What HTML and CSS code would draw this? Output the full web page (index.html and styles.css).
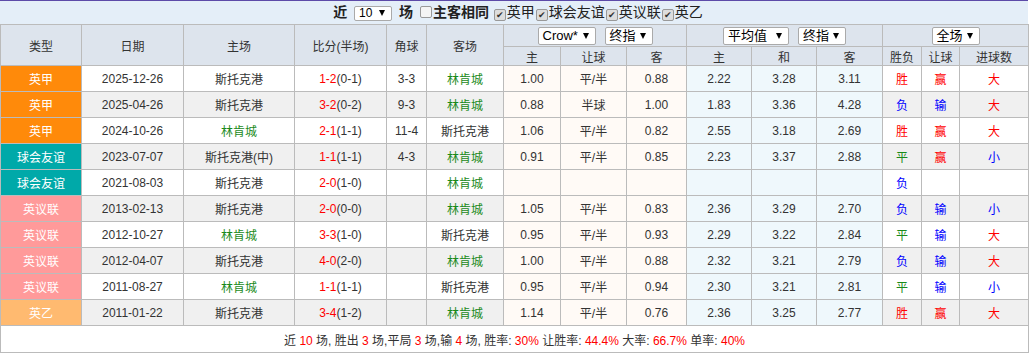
FILE: index.html
```html
<!DOCTYPE html>
<html lang="zh-CN">

<head>
    <meta charset="UTF-8">
    <title>对赛往绩</title>
    <link rel="stylesheet" href="styles.css">
</head>

<body>
    <div class="box">
        <div class="filter">
            <b>近</b>
            <span class="sel num">10</span>
            <b>场</b>
            <span class="chk"></span><b>主客相同</b>
            <span class="chk on">✔</span>英甲<span class="chk on">✔</span>球会友谊<span class="chk on">✔</span>英议联<span class="chk on">✔</span>英乙
        </div>
        <table class="data">
            <colgroup>
                <col style="width:81px">
                <col style="width:102px">
                <col style="width:111px">
                <col style="width:92px">
                <col style="width:40px">
                <col style="width:77px">
                <col style="width:57px">
                <col style="width:66px">
                <col style="width:60px">
                <col style="width:65px">
                <col style="width:65px">
                <col style="width:66px">
                <col style="width:39px">
                <col style="width:38px">
                <col style="width:69px">
            </colgroup>
            <thead>
                <tr class="h1">
                    <th rowspan="2">类型</th>
                    <th rowspan="2">日期</th>
                    <th rowspan="2">主场</th>
                    <th rowspan="2">比分(半场)</th>
                    <th rowspan="2">角球</th>
                    <th rowspan="2">客场</th>
                    <th colspan="3"><span class="sel w58">Crow*</span><span class="sel w48">终指</span></th>
                    <th colspan="3"><span class="sel w66">平均值</span><span class="sel w48">终指</span></th>
                    <th colspan="3"><span class="sel w48">全场</span></th>
                </tr>
                <tr class="h2">
                    <th>主</th><th>让球</th><th>客</th>
                    <th>主</th><th>和</th><th>客</th>
                    <th>胜负</th><th>让球</th><th>进球数</th>
                </tr>
            </thead>
            <tbody>
                <tr>
                    <td class="lg yj">英甲</td><td>2025-12-26</td><td>斯托克港</td>
                    <td><span class="r">1-2</span>(0-1)</td><td>3-3</td><td class="g">林肯城</td>
                    <td class="o1">1.00</td><td class="o1">平/半</td><td class="o1">0.88</td>
                    <td class="o2">2.22</td><td class="o2">3.28</td><td class="o2">3.11</td>
                    <td class="r">胜</td><td class="r">赢</td><td class="r">大</td>
                </tr>
                <tr class="alt">
                    <td class="lg yj">英甲</td><td>2025-04-26</td><td>斯托克港</td>
                    <td><span class="r">3-2</span>(0-2)</td><td>9-3</td><td class="g">林肯城</td>
                    <td class="o1">0.88</td><td class="o1">半球</td><td class="o1">1.00</td>
                    <td class="o2">1.83</td><td class="o2">3.36</td><td class="o2">4.28</td>
                    <td class="b">负</td><td class="b">输</td><td class="r">大</td>
                </tr>
                <tr>
                    <td class="lg yj">英甲</td><td>2024-10-26</td><td class="g">林肯城</td>
                    <td><span class="r">2-1</span>(1-1)</td><td>11-4</td><td>斯托克港</td>
                    <td class="o1">1.06</td><td class="o1">平/半</td><td class="o1">0.82</td>
                    <td class="o2">2.55</td><td class="o2">3.18</td><td class="o2">2.69</td>
                    <td class="r">胜</td><td class="r">赢</td><td class="r">大</td>
                </tr>
                <tr class="alt">
                    <td class="lg yy">球会友谊</td><td>2023-07-07</td><td>斯托克港(中)</td>
                    <td><span class="r">1-1</span>(1-1)</td><td>4-3</td><td class="g">林肯城</td>
                    <td class="o1">0.91</td><td class="o1">平/半</td><td class="o1">0.85</td>
                    <td class="o2">2.23</td><td class="o2">3.37</td><td class="o2">2.88</td>
                    <td class="g">平</td><td class="r">赢</td><td class="b">小</td>
                </tr>
                <tr>
                    <td class="lg yy">球会友谊</td><td>2021-08-03</td><td>斯托克港</td>
                    <td><span class="r">2-0</span>(1-0)</td><td></td><td class="g">林肯城</td>
                    <td class="o1"></td><td class="o1"></td><td class="o1"></td>
                    <td class="o2"></td><td class="o2"></td><td class="o2"></td>
                    <td class="b">负</td><td></td><td></td>
                </tr>
                <tr class="alt">
                    <td class="lg yl">英议联</td><td>2013-02-13</td><td>斯托克港</td>
                    <td><span class="r">2-0</span>(0-0)</td><td></td><td class="g">林肯城</td>
                    <td class="o1">1.05</td><td class="o1">平/半</td><td class="o1">0.83</td>
                    <td class="o2">2.36</td><td class="o2">3.29</td><td class="o2">2.70</td>
                    <td class="b">负</td><td class="b">输</td><td class="b">小</td>
                </tr>
                <tr>
                    <td class="lg yl">英议联</td><td>2012-10-27</td><td class="g">林肯城</td>
                    <td><span class="r">3-3</span>(1-0)</td><td></td><td>斯托克港</td>
                    <td class="o1">0.95</td><td class="o1">平/半</td><td class="o1">0.93</td>
                    <td class="o2">2.29</td><td class="o2">3.22</td><td class="o2">2.84</td>
                    <td class="g">平</td><td class="b">输</td><td class="r">大</td>
                </tr>
                <tr class="alt">
                    <td class="lg yl">英议联</td><td>2012-04-07</td><td>斯托克港</td>
                    <td><span class="r">4-0</span>(2-0)</td><td></td><td class="g">林肯城</td>
                    <td class="o1">1.00</td><td class="o1">平/半</td><td class="o1">0.88</td>
                    <td class="o2">2.32</td><td class="o2">3.21</td><td class="o2">2.79</td>
                    <td class="b">负</td><td class="b">输</td><td class="r">大</td>
                </tr>
                <tr>
                    <td class="lg yl">英议联</td><td>2011-08-27</td><td class="g">林肯城</td>
                    <td><span class="r">1-1</span>(1-1)</td><td></td><td>斯托克港</td>
                    <td class="o1">0.95</td><td class="o1">平/半</td><td class="o1">0.94</td>
                    <td class="o2">2.30</td><td class="o2">3.21</td><td class="o2">2.81</td>
                    <td class="g">平</td><td class="b">输</td><td class="b">小</td>
                </tr>
                <tr class="alt">
                    <td class="lg ye">英乙</td><td>2011-01-22</td><td>斯托克港</td>
                    <td><span class="r">3-4</span>(1-2)</td><td></td><td class="g">林肯城</td>
                    <td class="o1">1.14</td><td class="o1">平/半</td><td class="o1">0.76</td>
                    <td class="o2">2.36</td><td class="o2">3.25</td><td class="o2">2.77</td>
                    <td class="r">胜</td><td class="r">赢</td><td class="r">大</td>
                </tr>
                <tr class="sum">
                    <td colspan="15">近 <span class="r">10</span> 场, 胜出 <span class="r">3</span> 场,平局 <span class="r">3</span> 场,输 <span class="r">4</span> 场, 胜率: <span class="r">30%</span> 让胜率: <span class="r">44.4%</span> 大率: <span class="r">66.7%</span> 单率: <span class="r">40%</span></td>
                </tr>
            </tbody>
        </table>
    </div>
</body>

</html>
```
FILE: styles.css
```css
* {
    box-sizing: border-box;
}

body {
    margin: 0;
    background: #fff;
    font-family: "Liberation Sans", "Noto Sans CJK SC", sans-serif;
    font-size: 12px;
    color: #333;
}

.box {
    width: 1028px;
    border-top: 1px solid #5c4aa8;
}

.filter {
    height: 23px;
    background: #e4eef8;
    text-align: center;
    font-size: 14px;
    line-height: 23px;
    color: #222;
    padding-left: 8px;
}

.filter b {
    font-weight: bold;
}

.sel {
    display: inline-block;
    height: 18px;
    line-height: 16px;
    border: 1px solid #aaa;
    border-radius: 2px;
    background: #fff;
    color: #000;
    font-size: 13px;
    font-weight: normal;
    text-align: left;
    padding-left: 4px;
    position: relative;
    vertical-align: middle;
}

/* the little down arrow of each drop-down */
.sel::after {
    content: "";
    position: absolute;
    right: 6px;
    top: 5px;
    border-left: 3px solid transparent;
    border-right: 3px solid transparent;
    border-top: 6px solid #000;
}

.sel.num {
    width: 38px;
    height: 15px;
    line-height: 13px;
    font-size: 12px;
    margin: 0 3px;
}

.sel.num::after {
    top: 3px;
    right: 6px;
}

.w58 { width: 58px; margin-right: 9px; }
.w48 { width: 48px; }
.w66 { width: 66px; margin-right: 9px; }

.chk {
    display: inline-block;
    width: 12px;
    height: 12px;
    border: 1px solid #999;
    border-radius: 2px;
    background: #f4f4f4;
    vertical-align: -1px;
    font-size: 9px;
    line-height: 10px;
    text-align: center;
    color: #333;
    margin: 0 1px 0 3px;
}

.chk.on {
    background: #ddd;
    margin: 0 1px;
}

.data {
    width: 1028px;
    border-collapse: collapse;
    table-layout: fixed;
}

.data th,
.data td {
    border: 1px solid #bbb;
    padding: 0;
    text-align: center;
    white-space: nowrap;
}

.data th {
    background: #dde4ed;
    font-weight: normal;
    color: #333;
}

.h1 th {
    height: 22px;
}

.h2 th {
    height: 19px;
}

.data td {
    height: 26px;
    background: #fff;
}

.data tr.alt td {
    background: #f0f0f0;
}

.data td.o1,
.data tr.alt td.o1 {
    background: #fffaf6;
}

.data td.o2,
.data tr.alt td.o2 {
    background: #eff8fc;
}

.data td.lg {
    color: #fff;
}

.data td.yj,
.data tr.alt td.yj { background: #ff8a0a; }
.data td.yy,
.data tr.alt td.yy { background: #00a9a9; }
.data td.yl,
.data tr.alt td.yl { background: #ff9a9a; }
.data td.ye,
.data tr.alt td.ye { background: #ffba70; }

.r { color: #f00; }
.g { color: #1a8a1a; }
.b { color: #00f; }

.data tr.sum td {
    height: 27px;
    background: #fff;
    color: #333;
}
```
